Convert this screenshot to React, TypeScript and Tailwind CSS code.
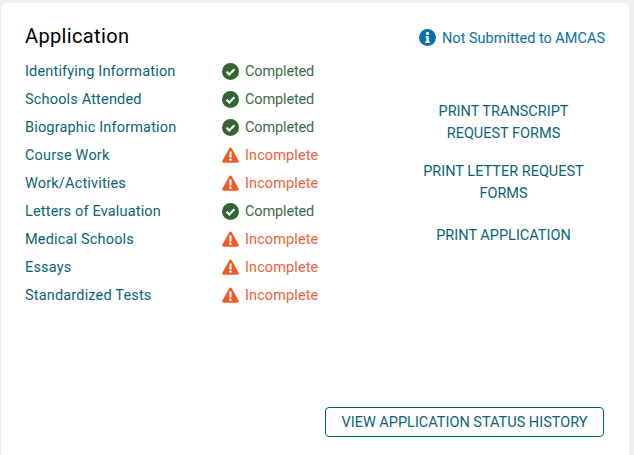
import React from "react";

const rows: [string, boolean][] = [
  ["Identifying Information", true],
  ["Schools Attended", true],
  ["Biographic Information", true],
  ["Course Work", false],
  ["Work/Activities", false],
  ["Letters of Evaluation", true],
  ["Medical Schools", false],
  ["Essays", false],
  ["Standardized Tests", false],
];

function Check() {
  return (
    <svg width="17" height="17" viewBox="0 0 17 17" className="mb-[2px] shrink-0">
      <circle cx="8.5" cy="8.5" r="8.5" fill="#33662f" />
      <path d="M4.6 8.8 7.3 11.4 12.4 6.2" fill="none" stroke="#fff" strokeWidth="2.2" />
    </svg>
  );
}

function Warn() {
  return (
    <svg width="17" height="16" viewBox="0 0 17 16" className="mb-[2px] shrink-0">
      <path d="M8.5 0.5c.5 0 .9.3 1.2.8l7 12.4c.5.9-.1 2-1.2 2H1.5c-1.1 0-1.7-1.1-1.2-2l7-12.4c.3-.5.7-.8 1.2-.8z" fill="#f15a22" />
      <rect x="7.4" y="4.6" width="2.2" height="6" rx="0.6" fill="#fff" />
      <circle cx="8.5" cy="12.8" r="1.25" fill="#fff" />
    </svg>
  );
}

function Info() {
  return (
    <svg width="17" height="17" viewBox="0 0 17 17" className="mb-[4px] shrink-0">
      <circle cx="8.5" cy="8.5" r="8.5" fill="#0a6fa5" />
      <circle cx="8.5" cy="4.4" r="1.6" fill="#fff" />
      <path d="M6.4 7h3.4v5.3h1v1.6H6.4v-1.6h1V8.6h-1z" fill="#fff" />
    </svg>
  );
}

export default function App() {
  return (
    <div className="h-[455px] w-[634px] overflow-hidden bg-[#f0f0f0] pt-[3px] pl-px font-['Roboto',sans-serif] text-[14.5px]">
      <div className="flex h-[460px] w-[628px] flex-col rounded-md bg-white pt-5 pr-6 pb-[26px] pl-6">
        <div className="flex grow">
          <div className="w-[197px] shrink-0">
            <h2 className="mb-[9px] text-[20px] leading-[26px] tracking-[0.35px] text-black">Application</h2>
            <ul className="tracking-[0.17px]">
              {rows.map(([n]) => (
                <li key={n} className="h-7 leading-7 text-[#0b6477]">{n}</li>
              ))}
            </ul>
          </div>
          <div className="w-[110px] shrink-0 pt-[35px]">
            {rows.map(([n, ok]) => (
              <div key={n} className={`flex h-7 items-center gap-[6px] ${ok ? "tracking-[-0.14px] text-[#3d6b4a]" : "tracking-[0.1px] text-[#f0623a]"}`}>
                {ok ? <Check /> : <Warn />}
                <span>{ok ? "Completed" : "Incomplete"}</span>
              </div>
            ))}
          </div>
          <div className="flex grow flex-col">
            <div className="flex items-center justify-end gap-[6px] pt-[5px] leading-[22px] text-[#0a6fa5]">
              <Info />
              <span>Not Submitted to AMCAS</span>
            </div>
            <div className="mt-[51px] flex flex-col items-center pl-[70px] text-center leading-[22px] text-[#0b6477]">
              <div className="w-[190px]">PRINT TRANSCRIPT REQUEST FORMS</div>
              <div className="mt-4 w-[190px]">PRINT LETTER REQUEST FORMS</div>
              <div className="mt-5 w-[190px]">PRINT APPLICATION</div>
            </div>
          </div>
        </div>
        <div className="flex justify-end pr-[1px]">
          <button className="h-[30px] w-[279px] rounded-[4px] border border-[#00666b] bg-white pt-px text-[#0b6477]">
            VIEW APPLICATION STATUS HISTORY
          </button>
        </div>
      </div>
    </div>
  );
}
